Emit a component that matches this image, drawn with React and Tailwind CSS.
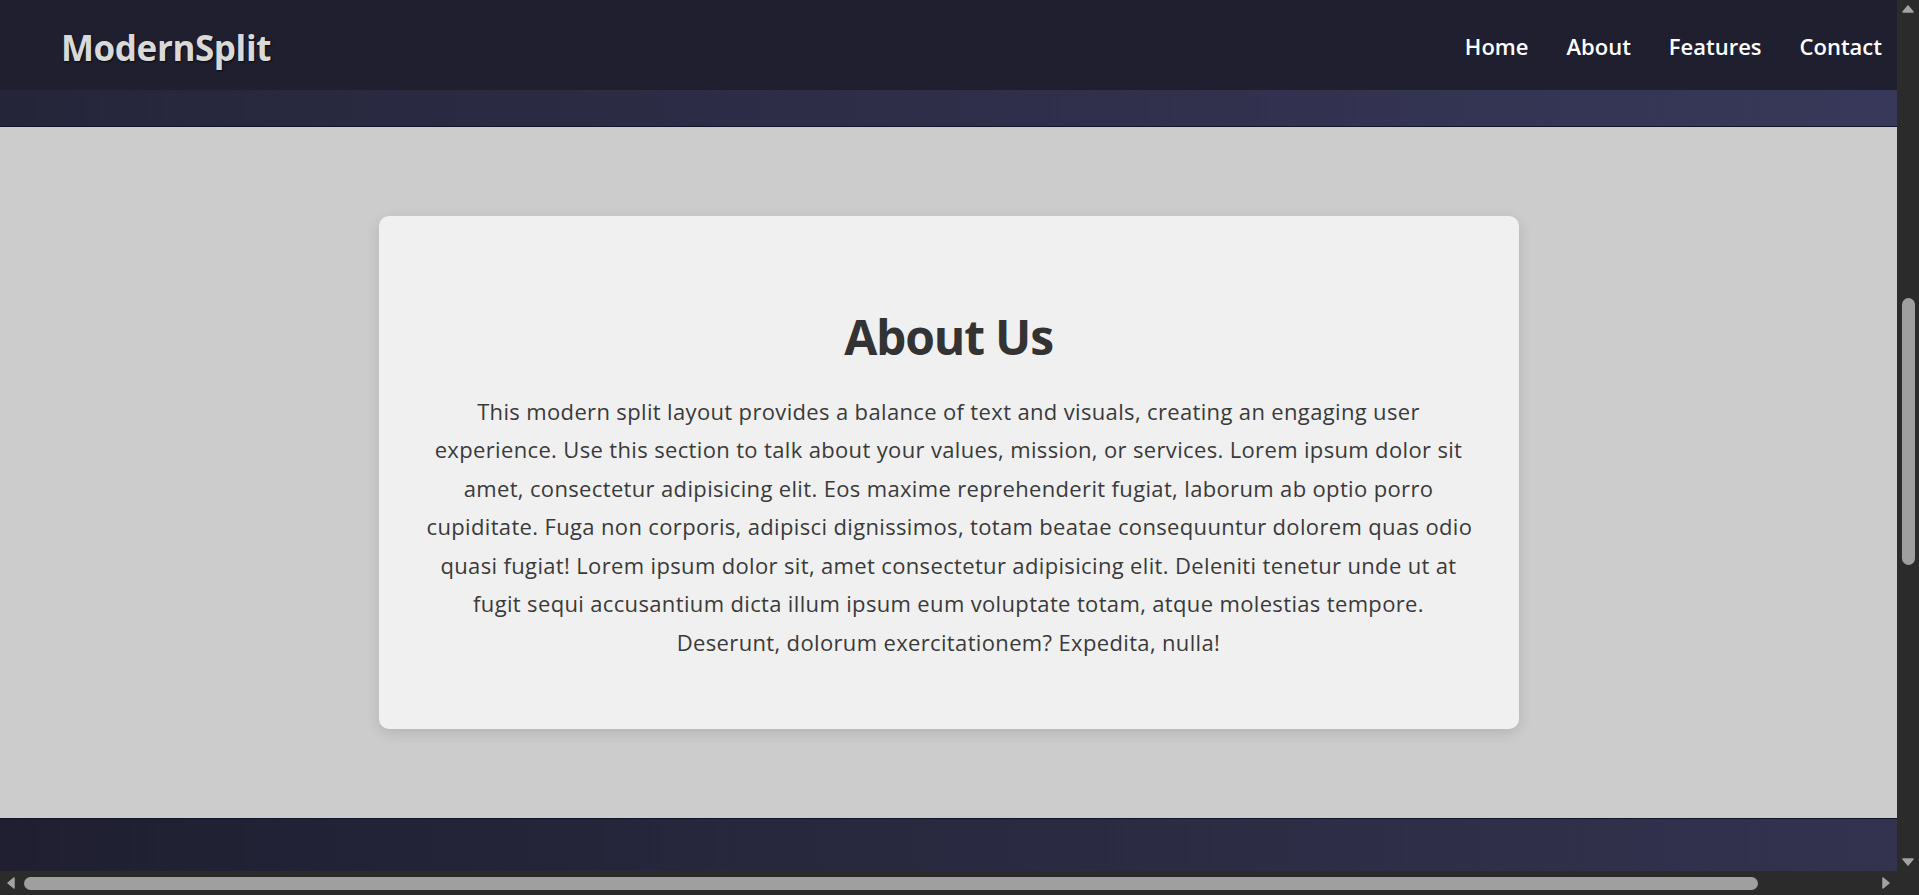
import React from 'react';

const lines = [
  'This modern split layout provides a balance of text and visuals, creating an engaging user',
  'experience. Use this section to talk about your values, mission, or services. Lorem ipsum dolor sit',
  'amet, consectetur adipisicing elit. Eos maxime reprehenderit fugiat, laborum ab optio porro',
  'cupiditate. Fuga non corporis, adipisci dignissimos, totam beatae consequuntur dolorem quas odio',
  'quasi fugiat! Lorem ipsum dolor sit, amet consectetur adipisicing elit. Deleniti tenetur unde ut at',
  'fugit sequi accusantium dicta illum ipsum eum voluptate totam, atque molestias tempore.',
  'Deserunt, dolorum exercitationem? Expedita, nulla!',
];

const Arrow = ({ dir }) => {
  const pts = {
    up: '1,8 6,2 11,8',
    down: '1,2 6,8 11,2',
    left: '8,1 2,6 8,11',
    right: '2,1 8,6 2,11',
  }[dir];
  const vertical = dir === 'up' || dir === 'down';
  return (
    <svg width={vertical ? 12 : 10} height={vertical ? 10 : 12} viewBox={vertical ? '0 0 12 10' : '0 0 10 12'}>
      <polygon points={pts} fill="#a3a3a3" stroke="#a3a3a3" strokeLinejoin="round" strokeWidth="1.5" />
    </svg>
  );
};

const App = () => {
  return (
    <div className="w-[1919px] h-[895px] flex flex-col overflow-hidden bg-[#2b2b2b] font-['Open_Sans','Liberation_Sans',sans-serif]">
      <div className="flex flex-1 min-h-0">
        {/* page */}
        <div className="flex-1 flex flex-col min-w-0">
          {/* Header */}
          <header className="h-[90px] shrink-0 bg-[#1f1f30] flex items-center justify-between pl-[61px] pr-[15px]">
            <h1 className="text-[35px] font-bold tracking-[-0.4px] text-[#d9d9d9] [text-shadow:1px_1px_2px_rgba(0,0,0,0.7)] leading-none pt-[4px]">ModernSplit</h1>
            <nav className="flex items-center gap-[38px] text-[22px] font-semibold text-white leading-none pt-[2px]">
              <a>Home</a>
              <a>About</a>
              <a>Features</a>
              <a>Contact</a>
            </nav>
          </header>

          <div className="h-[37px] shrink-0 bg-gradient-to-r from-[#25253a] to-[#38385a] border-b border-[#141428]" />

          {/* About section */}
          <section className="flex-1 bg-[#cccccc] flex items-center justify-center">
            <div className="w-[1140px] bg-[#f0f0f0] rounded-[10px] shadow-[0_4px_14px_rgba(0,0,0,0.12)] px-12 pt-[92px] pb-[68px] text-center">
              <h2 className="text-[48px] leading-[58px] font-bold tracking-[-1.2px] text-[#333333]">About Us</h2>
              <p className="mt-[26px] text-[22px] leading-[38.4px] tracking-[0.35px] text-[#3a3a3a] whitespace-nowrap">
                {lines.map((l, i) => (
                  <React.Fragment key={i}>
                    {l}
                    {i < lines.length - 1 && <br />}
                  </React.Fragment>
                ))}
              </p>
            </div>
          </section>

          <footer className="h-[53px] shrink-0 bg-gradient-to-r from-[#1f1f31] to-[#333350] border-t border-[#141428]" />
        </div>

        {/* vertical scrollbar */}
        <div className="w-[22px] shrink-0 bg-[#2b2b2b] flex flex-col items-center py-[4px]">
          <Arrow dir="up" />
          <div className="flex-1 w-full flex flex-col items-center pt-[284px] pb-[292px]">
            <div className="w-[13px] flex-1 rounded-full bg-[#9f9f9f]" />
          </div>
          <Arrow dir="down" />
        </div>
      </div>

      {/* horizontal scrollbar */}
      <div className="h-[24px] shrink-0 flex bg-[#2b2b2b]">
        <div className="flex-1 flex items-center px-[6px] gap-[8px]">
          <Arrow dir="left" />
          <div className="h-[13px] w-[1734px] rounded-full bg-[#9f9f9f]" />
          <div className="flex-1" />
          <Arrow dir="right" />
        </div>
        <div className="w-[22px]" />
      </div>
    </div>
  );
};

export default App;
